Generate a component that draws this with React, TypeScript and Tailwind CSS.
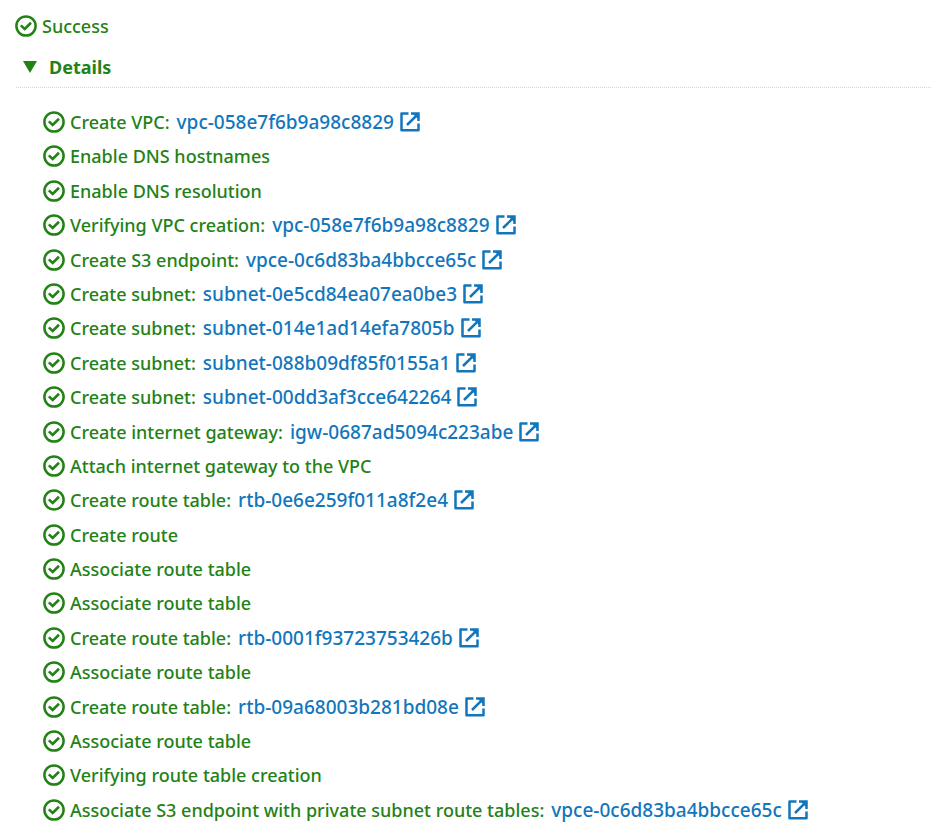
import { useState } from "react";

type Step = { label: string; resource?: string };

const steps: Step[] = [
  { label: "Create VPC:", resource: "vpc-058e7f6b9a98c8829" },
  { label: "Enable DNS hostnames" },
  { label: "Enable DNS resolution" },
  { label: "Verifying VPC creation:", resource: "vpc-058e7f6b9a98c8829" },
  { label: "Create S3 endpoint:", resource: "vpce-0c6d83ba4bbcce65c" },
  { label: "Create subnet:", resource: "subnet-0e5cd84ea07ea0be3" },
  { label: "Create subnet:", resource: "subnet-014e1ad14efa7805b" },
  { label: "Create subnet:", resource: "subnet-088b09df85f0155a1" },
  { label: "Create subnet:", resource: "subnet-00dd3af3cce642264" },
  { label: "Create internet gateway:", resource: "igw-0687ad5094c223abe" },
  { label: "Attach internet gateway to the VPC" },
  { label: "Create route table:", resource: "rtb-0e6e259f011a8f2e4" },
  { label: "Create route" },
  { label: "Associate route table" },
  { label: "Associate route table" },
  { label: "Create route table:", resource: "rtb-0001f93723753426b" },
  { label: "Associate route table" },
  { label: "Create route table:", resource: "rtb-09a68003b281bd08e" },
  { label: "Associate route table" },
  { label: "Verifying route table creation" },
  {
    label: "Associate S3 endpoint with private subnet route tables:",
    resource: "vpce-0c6d83ba4bbcce65c",
  },
];

function SuccessIcon() {
  return (
    <svg
      viewBox="0 0 22 22"
      className="size-[22px] shrink-0"
      fill="none"
      stroke="currentColor"
      strokeWidth="2.5"
      aria-hidden="true"
    >
      <circle cx="11" cy="11" r="9.6" />
      <path d="M5.8 10.4 L9.7 14 L16 7.8" strokeWidth="2.6" />
    </svg>
  );
}

function ExternalIcon() {
  return (
    <svg
      viewBox="0 0 20 20"
      className="size-5 shrink-0"
      fill="none"
      stroke="currentColor"
      strokeWidth="2.5"
      aria-hidden="true"
    >
      <path d="M8.5 1.5 H1.5 V18.25 H18.5 V11.5" strokeLinejoin="round" />
      <path d="M11 1.5 H18.5 V9" />
      <path d="M18 2.2 L7 13" />
      <path d="M13 2 H18.5 V7.5 Z" fill="currentColor" stroke="none" />
    </svg>
  );
}

export default function App() {
  const [open, setOpen] = useState(true);

  return (
    <main className="flex min-h-screen flex-col bg-white pt-3 pr-[18px] pb-[14px] pl-[15px] font-['Noto_Sans',sans-serif] text-lg leading-7 font-medium text-[#238216]">
      <div className="flex items-center gap-[5px]">
        <SuccessIcon />
        <span>Success</span>
      </div>
      <div className="mt-[13px] ml-px border-b border-dotted border-[#c5dfd0] pb-1.5">
        <button
          type="button"
          aria-expanded={open}
          onClick={() => setOpen(!open)}
          className="flex items-center gap-3 pl-[7px] font-bold"
        >
          <svg viewBox="0 0 14 12" className="h-3 w-3.5" fill="currentColor" aria-hidden="true">
            <path d="M0 0 H14 L7 12 Z" />
          </svg>
          Details
        </button>
      </div>
      {open && (
        <ul className="mt-5 flex flex-1 flex-col justify-between pl-7">
          {steps.map((step, i) => (
            <li key={i} className="flex items-center gap-[5px]">
              <SuccessIcon />
              <span>{step.label}</span>
              {step.resource && (
                <a href="#" className="ml-0.5 flex items-center gap-1.5 text-[19px] leading-7 text-[#1276bc]">
                  {step.resource}
                  <ExternalIcon />
                </a>
              )}
            </li>
          ))}
        </ul>
      )}
    </main>
  );
}
